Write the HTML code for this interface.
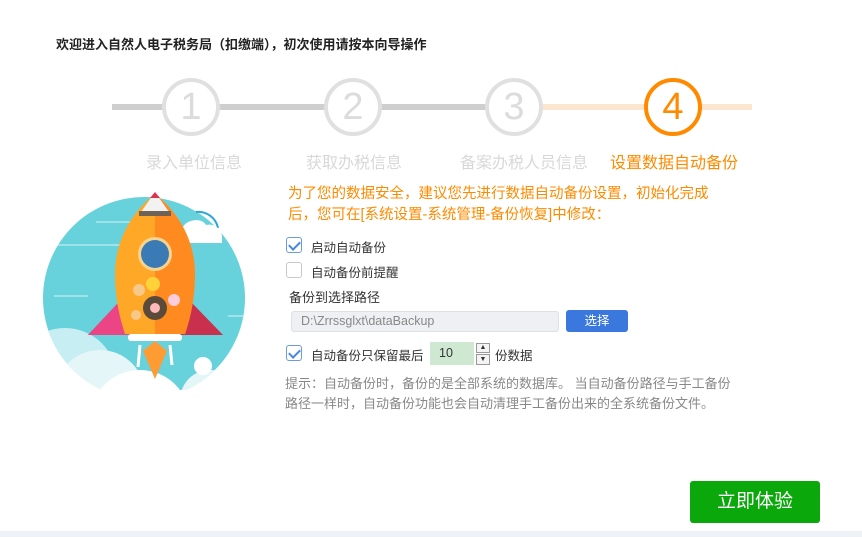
<!DOCTYPE html>
<html><head><meta charset="utf-8"><style>
*{margin:0;padding:0;box-sizing:border-box}
body{width:862px;height:537px;background:#fff;position:relative;overflow:hidden;font-family:"Liberation Sans","Noto Sans CJK SC",sans-serif;color:#333}
.abs{position:absolute}
.title{left:56px;top:34px;font-size:13px;font-weight:bold;color:#222}
.circ{width:58px;height:58px;border-radius:50%;border:4px solid #e0e0e0;background:#fff;text-align:center;line-height:50px;font-size:38px;color:#dcdcdc;font-weight:300}
.lab{top:149px;font-size:16px;color:#d8d8d8;width:160px;text-align:center}
.cb{width:16px;height:16px;border:1px solid #c8c8c8;border-radius:3px;background:#fff}
.cb.on{border-color:#6a9be0}
.cb.on:after{content:"";position:absolute;left:4px;top:1px;width:5px;height:9px;border:solid #4a86e0;border-width:0 2px 2px 0;transform:rotate(45deg)}
.t13{font-size:12.5px;color:#333}
</style></head><body>
<div class="abs title">欢迎进入自然人电子税务局（扣缴端），初次使用请按本向导操作</div>
<div class="abs" style="left:112px;top:104px;width:430px;height:6px;background:#cfcfcf"></div>
<div class="abs" style="left:540px;top:104px;width:212px;height:6px;background:#fde6cf"></div>
<div class="abs circ" style="left:162px;top:78px">1</div>
<div class="abs circ" style="left:324px;top:78px">2</div>
<div class="abs circ" style="left:485px;top:78px">3</div>
<div class="abs circ" style="left:644px;top:78px;border-color:#ff8a00;color:#ff8a00">4</div>
<div class="abs lab" style="left:114px">录入单位信息</div>
<div class="abs lab" style="left:274px">获取办税信息</div>
<div class="abs lab" style="left:434px;width:180px">备案办税人员信息</div>
<div class="abs lab" style="left:594px;width:160px;color:#ff8a00">设置数据自动备份</div>

<svg class="abs" style="left:40px;top:180px" width="220" height="210" viewBox="0 0 220 210">
<defs><clipPath id="c"><circle cx="104" cy="118" r="101"/></clipPath></defs>
<circle cx="104" cy="118" r="101" fill="#67d2dc"/>
<g clip-path="url(#c)">
<line x1="56" y1="42" x2="110" y2="42" stroke="#9fe3ea" stroke-width="2"/>
<line x1="18" y1="65" x2="80" y2="65" stroke="#9fe3ea" stroke-width="2"/>
<line x1="14" y1="116" x2="48" y2="116" stroke="#9fe3ea" stroke-width="2"/>
<line x1="188" y1="136" x2="210" y2="136" stroke="#9fe3ea" stroke-width="2"/>
<circle cx="25" cy="200" r="52" fill="#c7eef2"/>
<circle cx="60" cy="215" r="45" fill="#e4f6f8"/>
<circle cx="100" cy="240" r="50" fill="#fff"/>
<circle cx="170" cy="220" r="30" fill="#e4f6f8"/>
</g>
<path d="M156 32a20 20 0 0 1 22 16" fill="none" stroke="#2aa6d8" stroke-width="2"/>
<path d="M140 63c-8 0-8-14 2-14c3-10 20-12 24-4c10-2 16 6 16 12v6z" fill="#fff"/>
<circle cx="163" cy="186" r="9" fill="#fff"/>
<path d="M48 155l30-32h74l31 32z" fill="#c9304e"/>
<path d="M48 155l30-32h37v32z" fill="#ec4585"/>
<path d="M115 14c-26 20-40 50-40 80c0 25 5 45 10 60h60c5-15 10-35 10-60c0-30-14-60-40-80z" fill="#ffa726"/>
<path d="M115 14c26 20 40 50 40 80c0 25-5 45-10 60h-30z" fill="#ff8a1f"/>
<path d="M115 12l-14 20h28z" fill="#f2f2f2"/>
<path d="M115 12l-5 6h10z" fill="#d9354f"/>
<rect x="99" y="31" width="32" height="5" fill="#6e6257"/>
<circle cx="115" cy="74" r="17" fill="#f6d38e"/>
<circle cx="115" cy="74" r="14" fill="#3b7bb5"/>
<circle cx="115" cy="128" r="12" fill="#5a4a3a"/><circle cx="115" cy="128" r="5" fill="#fbb"/>
<circle cx="113" cy="104" r="7" fill="#ffd23a"/><circle cx="134" cy="120" r="6" fill="#fcd"/>
<circle cx="99" cy="110" r="6" fill="#f8c88a"/><circle cx="96" cy="135" r="5" fill="#f8c88a"/>
<rect x="88" y="154" width="54" height="7" rx="3" fill="#fff"/>
<path d="M115 161l-12 10l12 28l12-28z" fill="#ff9b33"/>
<path d="M100 165l-2 22M130 165l2 20" stroke="#fff" stroke-width="3"/>
</svg>

<div class="abs" style="left:288px;top:184px;width:440px;font-size:14.5px;line-height:21px;color:#ff8a00">为了您的数据安全，建议您先进行数据自动备份设置，初始化完成后，您可在[系统设置-系统管理-备份恢复]中修改：</div>
<div class="abs cb on" style="left:286px;top:237px"></div>
<div class="abs t13" style="left:311px;top:237px">启动自动备份</div>
<div class="abs cb" style="left:286px;top:262px"></div>
<div class="abs t13" style="left:311px;top:262px">自动备份前提醒</div>
<div class="abs" style="left:289px;top:287px;font-size:13px;color:#333">备份到选择路径</div>
<div class="abs" style="left:291px;top:311px;width:268px;height:21px;background:#eef0f3;border:1px solid #dde0e4;border-radius:3px;font-size:12.5px;color:#888;padding:2px 9px">D:\Zrrssglxt\dataBackup</div>
<div class="abs" style="left:566px;top:310px;width:62px;height:22px;background:#3a78de;border-radius:3px;color:#fff;font-size:12.5px;text-align:center;line-height:22px">选择</div>
<div class="abs cb on" style="left:286px;top:345px"></div>
<div class="abs t13" style="left:311px;top:345px">自动备份只保留最后</div>
<div class="abs" style="left:430px;top:342px;width:44px;height:23px;background:#cfe8d2;font-size:12.5px;color:#333;padding:4px 9px">10</div>
<div class="abs" style="left:476px;top:343px;width:14px;height:10px;border:1px solid #999;font-size:7px;line-height:8px;text-align:center;background:#f4f4f4">▲</div>
<div class="abs" style="left:476px;top:354px;width:14px;height:11px;border:1px solid #999;font-size:7px;line-height:9px;text-align:center;background:#f4f4f4">▼</div>
<div class="abs t13" style="left:495px;top:345px">份数据</div>
<div class="abs" style="left:285px;top:374px;width:450px;font-size:13px;line-height:20px;color:#888">提示：自动备份时，备份的是全部系统的数据库。 当自动备份路径与手工备份路径一样时，自动备份功能也会自动清理手工备份出来的全系统备份文件。</div>
<div class="abs" style="left:690px;top:481px;width:130px;height:42px;background:#0aa80a;border-radius:3px;color:#fff;font-size:19px;text-align:center;line-height:42px">立即体验</div>
<div class="abs" style="left:0;top:531px;width:862px;height:6px;background:#eef2f7"></div>
</body></html>
